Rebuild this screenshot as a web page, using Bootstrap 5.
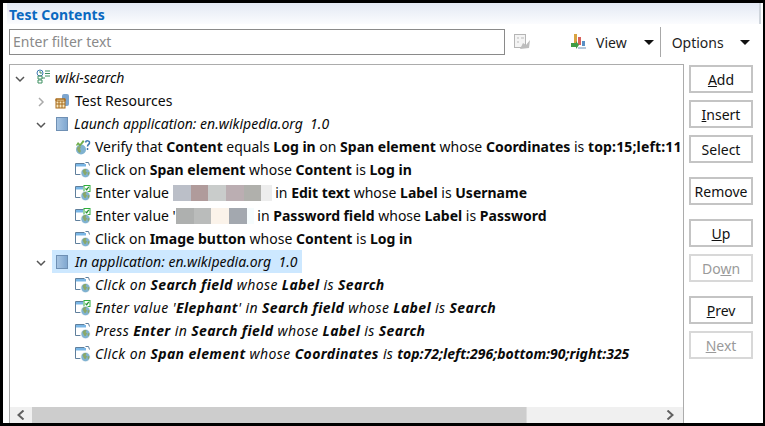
<!DOCTYPE html>
<html lang="en">
<head>
<meta charset="UTF-8">
<title>Test Contents</title>
<link href="https://cdn.jsdelivr.net/npm/bootstrap@5.3.0/dist/css/bootstrap.min.css" rel="stylesheet">
<style>
html, body { height: 426px; overflow: hidden; }
body { background: #fff; font-family: "Noto Sans", "Open Sans", sans-serif; font-size: 14px; color: #0a0a0a; }
.frame { height: 426px; width: 765px; border-top: 3px solid #000; border-bottom: 3px solid #000; border-left: 3px solid #000; border-right: 2px solid #000; }
.title-bar { height: 21px; margin-left: 4px; margin-right: 2px; padding-left: 2px; border-right: 2px solid #cfd5dc; color: #0a69c0; font-weight: 700; font-size: 14px; line-height: 23px; background: linear-gradient(#e3e9f4, #fbfcfe); }
.tool-row { height: 40px; padding: 3px 0 7px 6px; }
.filter-box { width: 496px; height: 26px; border: 1px solid #8a8a8a; padding: 0 3px; line-height: 24px; color: #8a8a8a; }
.tool-icon-gap { margin-left: 39px; }
.view-label { margin-left: 10px; color: #1d1d1d; }
.opts-label { margin-left: 11px; color: #1d1d1d; }
.down-arrow { width: 0; height: 0; border-left: 5px solid transparent; border-right: 5px solid transparent; border-top: 5px solid #111; }
.view-arrow { margin-left: 17px; }
.opts-arrow { margin-left: 16px; }
.tool-sep { width: 1px; height: 30px; margin-left: 6px; background: #a8a8a8; }
.main-area { height: 359px; padding-left: 6px; }
.tree-box { width: 675px; height: 100%; border: 1px solid #acacac; border-bottom: 0; overflow: hidden; position: relative; padding-top: 1px; }
.tree-row { height: 23px; line-height: 23px; white-space: nowrap; display: flex; align-items: center; }
.tree-row svg { flex: none; }
.row-text { padding-left: 4px; }
.res-row .row-text { padding-left: 5px; }
.lvl-0 { padding-left: 5px; }
.lvl-1 { padding-left: 26px; }
.lvl-2 { padding-left: 65px; }
.twist-0 { width: 21px; flex: none; }
.twist-1 { width: 19px; flex: none; }
.twist-sel { width: 16px; flex: none; }
.sel-row { background: #cde8ff; padding-left: 3px; width: 250px; height: 23px; }
.sel-row .row-text { padding-left: 6px; }
.app-row .row-text { padding-left: 5px; }
.wide-row { letter-spacing: .38px; }
.tight-end { letter-spacing: 0; }
.last-clip { letter-spacing: .15px; }
.blur { display: inline-block; height: 16px; vertical-align: -3px; }
.b1 { width: 18px; background: #bbbfc8; } .b2 { width: 17px; background: #b09b9b; } .b3 { width: 18px; background: #c9cccb; }
.b4 { width: 18px; background: #bbaeb2; } .b5 { width: 17px; background: #b0b0ac; } .b6 { width: 11px; background: #ededed; }
.b7 { width: 18px; background: #aeb0af; } .b8 { width: 17px; background: #babcbb; } .b9 { width: 18px; background: #fbf3ea; }
.b10 { width: 18px; background: #a3a8af; } .b11 { width: 7px; background: #f6fcfd; }
.h-scroll { position: absolute; left: 0; right: 0; bottom: 0; height: 16px; background: #f0f0f0; }
.scroll-end { width: 22px; flex: none; padding-left: 7px; }
.h-thumb { width: 495px; height: 100%; flex: none; background: #cdcdcd; border-right: 1px solid #dcdcdc; }
.scroll-rest { padding-right: 9px; }
.btn-col { width: 64px; margin-left: 5px; padding-top: 1px; }
.side-btn { display: block; width: 64px; height: 28px; margin-bottom: 7px; padding: 0; border-radius: 0; background: #fff; border: 2px solid #c4c4c4; color: #111; font-size: 14px; line-height: 26px; }
.side-btn:disabled { background: #fff; border-color: #d8d8d8; color: #9a9a9a; opacity: 1; }
.btn-gap { margin-bottom: 14px; }
</style>
</head>
<body>
<svg width="0" height="0" class="position-absolute">
  <defs>
    <linearGradient id="appfill" x1="0" x2="1" y1="0" y2="0"><stop offset="0" stop-color="#a9c6e3"/><stop offset="1" stop-color="#7ea6cf"/></linearGradient>
    <symbol id="globe" viewBox="0 0 16 16">
      <circle cx="10.500" cy="11" r="5" fill="#eef2f6"/>
      <circle cx="10.500" cy="11" r="4.200" fill="#7fb2d0"/>
      <path d="M7.500 9c1-1.800 3-2.200 4-1.700l-1 2 1.500 1-1 2.200-1 .8c-1-.8-1.800-2.500-2.500-4.300zM12.500 10.500l1.800-.5c.3 1.300-.2 2.800-1.300 3.500z" fill="#8aa868"/>
    </symbol>
    <symbol id="win" viewBox="0 0 16 16">
      <path d="M.5 1.500h9M.5 1.500v11h5" fill="none" stroke="#5f7f9c"/>
      <path d="M1 2h10v2.500H1z" fill="#79b6e6"/>
      <path d="M10.500 .5h3l1 3" fill="none" stroke="#5f7f9c"/>
      <use href="#globe"/>
    </symbol>
    <symbol id="win-check" viewBox="0 0 16 16">
      <path d="M.5 1.500h8M.5 1.500v11h5" fill="none" stroke="#5f7f9c"/>
      <path d="M1 2h7v2.500H1z" fill="#79b6e6"/>
      <rect x="9" y=".5" width="6" height="6" fill="#fff" stroke="#2fae3c"/>
      <path d="M10.500 3.500l1.200 1.300 2-3" fill="none" stroke="#1f8f2c" stroke-width="1.200"/>
      <use href="#globe"/>
    </symbol>
    <symbol id="verify" viewBox="0 0 16 16">
      <circle cx="6" cy="10.500" r="5" fill="#7fb2d0"/>
      <path d="M2 9c1-2 3-2 4-1l-1 2 1 2-1 2c-2-.5-3-3-3-5z" fill="#8aa868"/>
      <path d="M1 6l2-3 2 2 3-4 1.500 1.500-4.500 5-2-2-1 1.500z" fill="#6fae4a"/>
      <path d="M10.500 3.500c.5-2.500 4.500-2 4 .5-.3 1.500-2 1.500-2 3.500M12.500 9v2" fill="none" stroke="#3c78b0" stroke-width="1.500"/>
    </symbol>
    <symbol id="app" viewBox="0 0 14 16">
      <rect x="1.500" y="1.500" width="11" height="13" fill="url(#appfill)" stroke="#6f90b4"/>
    </symbol>
    <symbol id="open" viewBox="0 0 10 10"><path d="M1 3l4 4 4-4" fill="none" stroke="#555" stroke-width="1.500"/></symbol>
    <symbol id="closed" viewBox="0 0 10 10"><path d="M3 1l4 4-4 4" fill="none" stroke="#aaa" stroke-width="1.500"/></symbol>
  </defs>
</svg>

<div class="frame">
  <div class="title-bar">Test Contents</div>

  <div class="tool-row d-flex align-items-center">
    <div class="filter-box">Enter filter text</div>
    <svg class="ms-2" width="18" height="18" viewBox="0 0 18 18"><rect x="1.500" y="1.500" width="11" height="13" fill="#f4f4f4" stroke="#b5b5b5"/><path d="M4 5h2M8 5h3M4 9h2" stroke="#bbb"/><path d="M7 16l3-6 3 2 4-5-1 8z" fill="#bdbdbd"/></svg>
    <svg class="tool-icon-gap" width="16" height="18" viewBox="0 0 16 18"><rect x="4" y="1" width="3" height="10" fill="#d9a441"/><rect x="8" y="4" width="3" height="8" fill="#d9605a"/><rect x="12" y="8" width="3" height="5" fill="#5a8fc4"/><path d="M1 10h5v-2l3 4-3 4v-2H1z" fill="#3f9c45"/><path d="M8 15h8" stroke="#6b8fb5"/></svg>
    <span class="view-label">View</span>
    <span class="down-arrow view-arrow"></span>
    <span class="tool-sep"></span>
    <span class="opts-label">Options</span>
    <span class="down-arrow opts-arrow"></span>
  </div>

  <div class="main-area d-flex">
    <div class="tree-box">
      <div class="tree-row lvl-0"><span class="twist-0"><svg width="10" height="10"><use href="#open"/></svg></span><svg width="15" height="17" viewBox="0 0 15 17"><circle cx="4" cy="4" r="3" fill="#fff" stroke="#3c78b0"/><path d="M4 2v2h2M2 7h4v3H2zM2 11h4v3H2zM6 9h3M9 2h5M9 4.500h5M9 7h5" fill="none" stroke="#3c9060"/></svg><span class="row-text fst-italic">wiki-search</span></div>
      <div class="tree-row lvl-1 res-row"><span class="twist-1"><svg width="10" height="10"><use href="#closed"/></svg></span><svg width="15" height="16" viewBox="0 0 15 16"><rect x="7" y="1" width="7" height="12" rx="2" fill="#7ea6cf"/><rect x="1" y="6" width="9" height="9" fill="#f6e7c0" stroke="#a86a1a"/><path d="M1 6h9v2H1zM4 8v7M7 8v7M1 11h9" fill="none" stroke="#a86a1a"/></svg><span class="row-text">Test Resources</span></div>
      <div class="tree-row lvl-1 app-row"><span class="twist-1"><svg width="10" height="10"><use href="#open"/></svg></span><svg width="14" height="16"><use href="#app"/></svg><span class="row-text fst-italic">Launch application: en.wikipedia.org&nbsp; 1.0</span></div>
      <div class="tree-row lvl-2"><svg width="16" height="16"><use href="#verify"/></svg><span class="row-text">Verify that <b>Content</b> equals <b>Log in</b> on <b>Span element</b> whose <b>Coordinates</b> is <b class="last-clip">top:15;left:11</b></span></div>
      <div class="tree-row lvl-2"><svg width="16" height="16"><use href="#win"/></svg><span class="row-text">Click on <b>Span element</b> whose <b>Content</b> is <b>Log in</b></span></div>
      <div class="tree-row lvl-2"><svg width="16" height="16"><use href="#win-check"/></svg><span class="row-text">Enter value <span class="blur b1"></span><span class="blur b2"></span><span class="blur b3"></span><span class="blur b4"></span><span class="blur b5"></span><span class="blur b6"></span> in <b>Edit text</b> whose <b>Label</b> is <b>Username</b></span></div>
      <div class="tree-row lvl-2"><svg width="16" height="16"><use href="#win-check"/></svg><span class="row-text">Enter value '<span class="blur b7"></span><span class="blur b8"></span><span class="blur b9"></span><span class="blur b10"></span><span class="blur b11"></span> in <b>Password field</b> whose <b>Label</b> is <b>Password</b></span></div>
      <div class="tree-row lvl-2"><svg width="16" height="16"><use href="#win"/></svg><span class="row-text">Click on <b>Image button</b> whose <b>Content</b> is <b>Log in</b></span></div>
      <div class="tree-row lvl-1"><span class="twist-sel"><svg width="10" height="10"><use href="#open"/></svg></span><div class="sel-row d-flex align-items-center"><svg width="14" height="16"><use href="#app"/></svg><span class="row-text fst-italic">In application: en.wikipedia.org&nbsp; 1.0</span></div></div>
      <div class="tree-row lvl-2 fst-italic wide-row"><svg width="16" height="16"><use href="#win"/></svg><span class="row-text">Click on <b>Search field</b> whose <b>Label</b> is <b>Search</b></span></div>
      <div class="tree-row lvl-2 fst-italic wide-row"><svg width="16" height="16"><use href="#win-check"/></svg><span class="row-text">Enter value '<b>Elephant</b>' in <b>Search field</b> whose <b>Label</b> is <b>Search</b></span></div>
      <div class="tree-row lvl-2 fst-italic wide-row"><svg width="16" height="16"><use href="#win"/></svg><span class="row-text">Press <b>Enter</b> in <b>Search field</b> whose <b>Label</b> is <b>Search</b></span></div>
      <div class="tree-row lvl-2 fst-italic wide-row"><svg width="16" height="16"><use href="#win"/></svg><span class="row-text">Click on <b>Span element</b> whose <b>Coordinates</b> is <b class="tight-end">top:72;left:296;bottom:90;right:325</b></span></div>
      <div class="h-scroll d-flex align-items-center">
        <span class="scroll-end d-flex"><svg width="8" height="10" viewBox="0 0 8 10"><path d="M6.500 .5L1.500 5l5 4.500" fill="none" stroke="#606060" stroke-width="2"/></svg></span>
        <div class="h-thumb"></div>
        <span class="scroll-rest flex-grow-1 d-flex justify-content-end"><svg width="8" height="10" viewBox="0 0 8 10"><path d="M1.500 .5l5 4.500-5 4.500" fill="none" stroke="#606060" stroke-width="2"/></svg></span>
      </div>
    </div>

    <div class="btn-col">
      <button class="btn side-btn"><u>A</u>dd</button>
      <button class="btn side-btn"><u>I</u>nsert</button>
      <button class="btn side-btn btn-gap">Select</button>
      <button class="btn side-btn btn-gap">Remove</button>
      <button class="btn side-btn"><u>U</u>p</button>
      <button class="btn side-btn btn-gap" disabled>Do<u>w</u>n</button>
      <button class="btn side-btn"><u>P</u>rev</button>
      <button class="btn side-btn" disabled><u>N</u>ext</button>
    </div>
  </div>
</div>
<script src="https://cdn.jsdelivr.net/npm/bootstrap@5.3.0/dist/js/bootstrap.bundle.min.js"></script>
</body>
</html>
